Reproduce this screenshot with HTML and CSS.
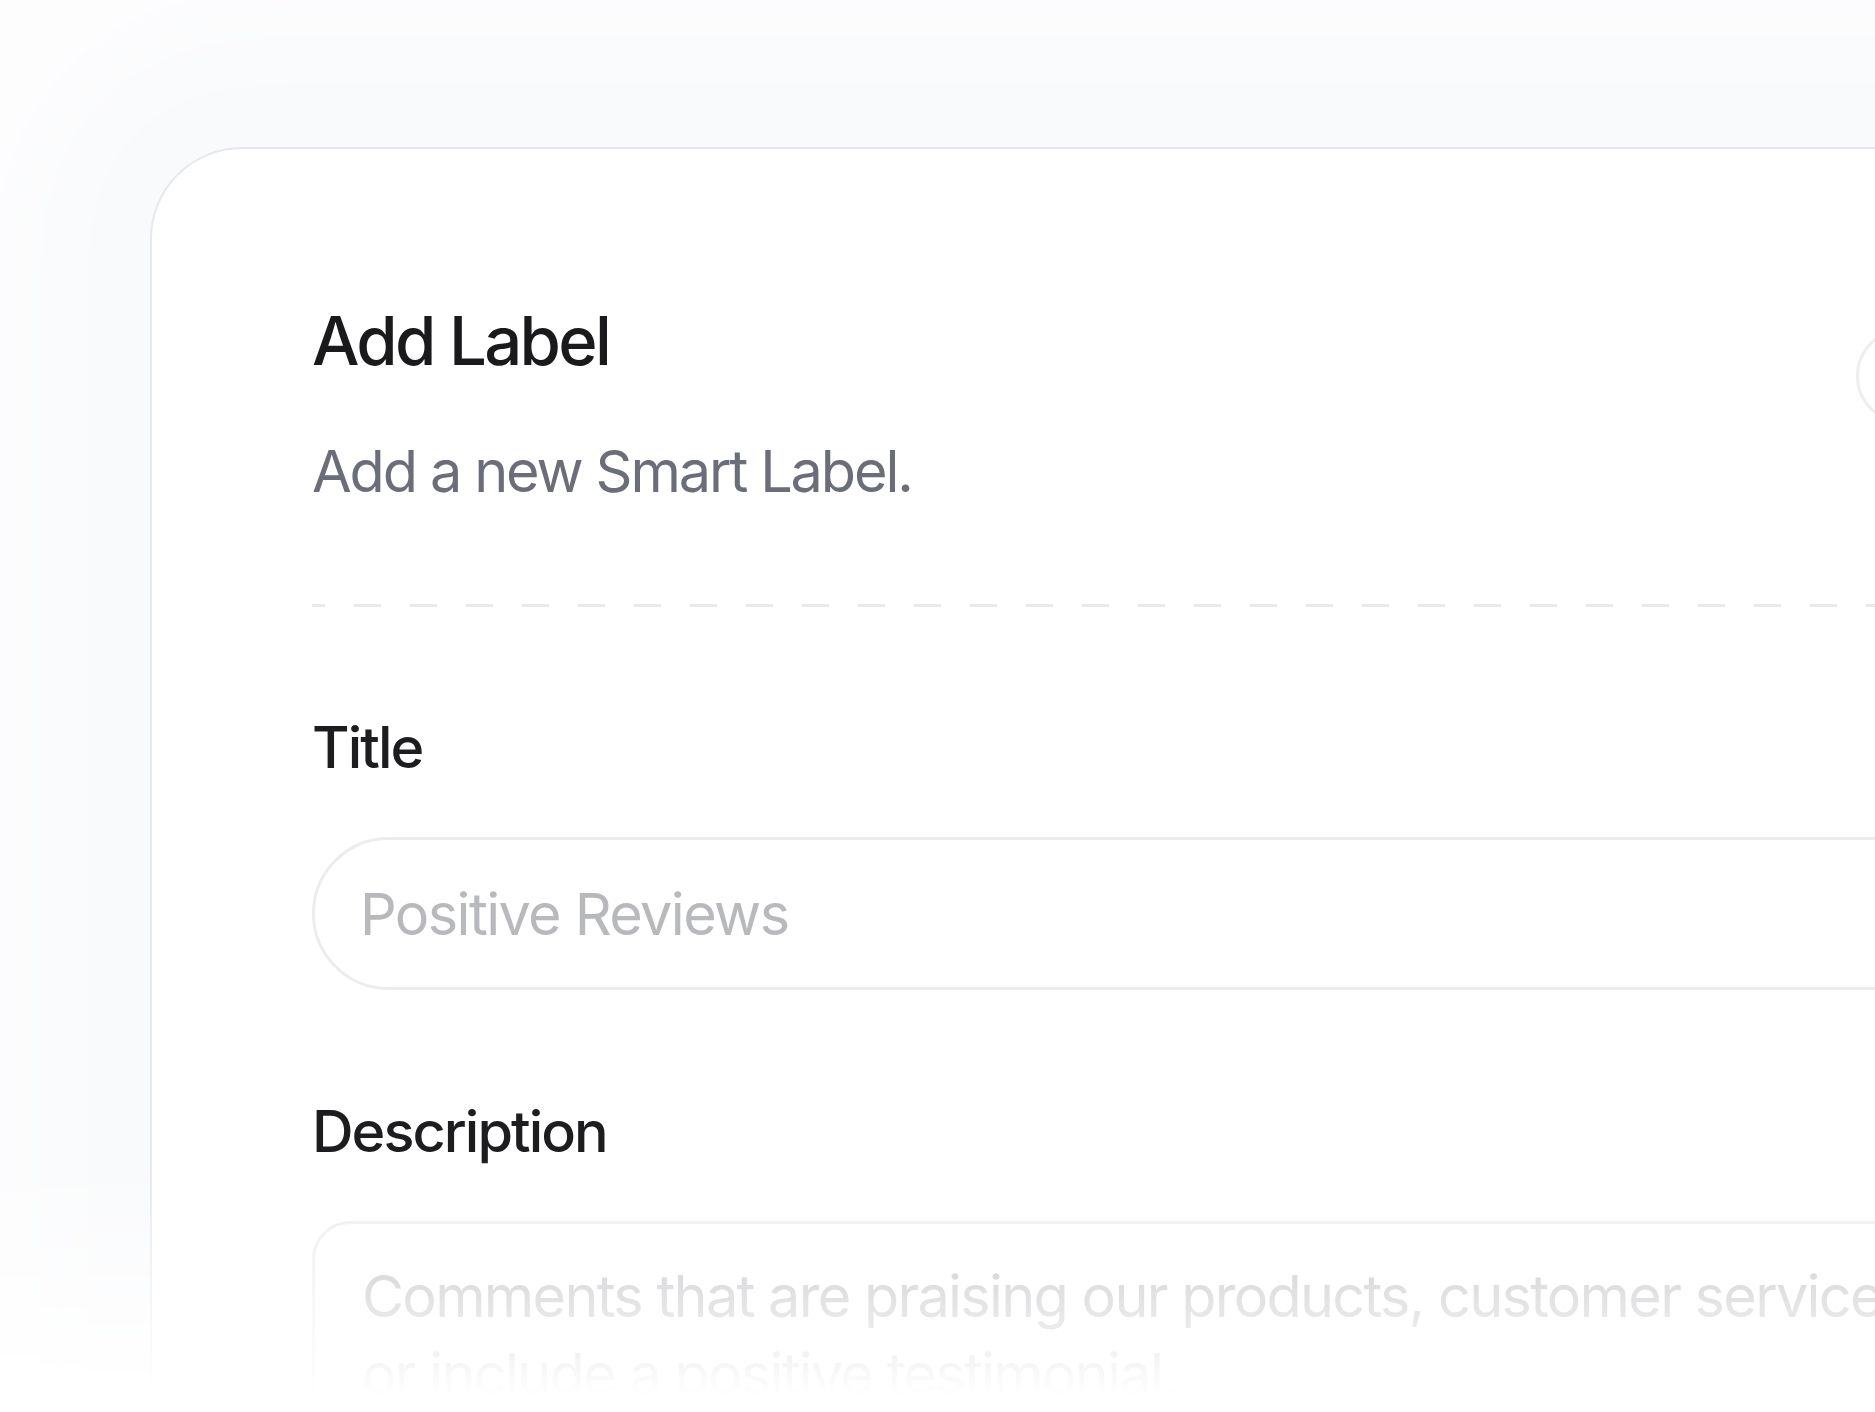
FILE: index.html
```html
<!DOCTYPE html>
<html lang="en">
<head>
<meta charset="utf-8">
<title>Add Label</title>
<link rel="stylesheet" href="styles.css">
</head>
<body>
<div class="stage">
  <section class="card">
    <header class="header">
      <div class="heading">
        <h1 class="title">Add Label</h1>
        <p class="subtitle">Add a new Smart Label.</p>
      </div>
      <button class="close" type="button" aria-label="Close">
        <svg viewBox="0 0 24 24" width="40" height="40" fill="none" stroke="#71717a" stroke-width="2" stroke-linecap="round"><path d="M6 6l12 12M18 6L6 18"/></svg>
      </button>
    </header>
    <div class="divider"></div>
    <form class="form">
      <div class="field">
        <label class="label" for="title">Title</label>
        <input class="input" id="title" type="text" placeholder="Positive Reviews">
      </div>
      <div class="field field-desc">
        <label class="label" for="desc">Description</label>
        <textarea class="textarea" id="desc" placeholder="Comments that are praising our products, customer service,&#10;or include a positive testimonial."></textarea>
      </div>
    </form>
  </section>
</div>
</body>
</html>
```

FILE: styles.css
```css
html, body {
  margin: 0;
  padding: 0;
  background: #ffffff;
}

.stage {
  width: 1875px;
  height: 1412px;
  overflow: hidden;
  box-sizing: border-box;
  padding: 147px 0 0 150px;
  background: #fdfdfe;
  font-family: Inter, "Noto Sans", sans-serif;
  -webkit-mask-image: linear-gradient(to bottom, #000 1160px, transparent 1395px);
  mask-image: linear-gradient(to bottom, #000 1160px, transparent 1395px);
}

.card {
  width: 1964px;
  min-height: 1500px;
  box-sizing: border-box;
  border: 2px solid #e6e8ec;
  border-radius: 92px;
  background: #ffffff;
  padding: 152px 160px 0;
  box-shadow: 0 0 100px 110px #f9fafc;
}

.header {
  display: flex;
  justify-content: space-between;
  align-items: flex-start;
}

.title {
  margin: 0;
  font-size: 67px;
  line-height: 80px;
  font-weight: 500;
  color: #1a1a1d;
  letter-spacing: -0.04em;
}

.subtitle {
  margin: 52px 0 0;
  font-size: 57.6px;
  line-height: 77px;
  font-weight: 400;
  color: #6b6e78;
  letter-spacing: -0.037em;
}

.close {
  width: 96px;
  height: 96px;
  margin-top: 27px;
  box-sizing: border-box;
  border: 3px solid #eeeeee;
  border-radius: 50%;
  background: #ffffff;
  display: flex;
  align-items: center;
  justify-content: center;
  padding: 0;
}

.divider {
  height: 3px;
  margin-top: 94px;
  background-image: linear-gradient(to right, #e9e9e9 27px, transparent 27px);
  background-size: 56px 100%;
  background-position: -14px 0;
  background-repeat: repeat-x;
}

.form {
  display: flex;
  flex-direction: column;
}

.field {
  display: flex;
  flex-direction: column;
  margin-top: 102px;
}

.field-desc {
  margin-top: 103px;
}

.label {
  font-size: 57.6px;
  line-height: 77px;
  font-weight: 500;
  color: #1d1d20;
  letter-spacing: -0.034em;
}

.input {
  margin-top: 51px;
  height: 153px;
  box-sizing: border-box;
  border: 3px solid #ececec;
  border-radius: 999px;
  padding: 0 45px;
  font-family: Inter, "Noto Sans", sans-serif;
  font-size: 57.6px;
  letter-spacing: -0.028em;
  color: #18181b;
  background: #ffffff;
  outline: none;
}

.textarea {
  margin-top: 51px;
  height: 420px;
  box-sizing: border-box;
  border: 3px solid #ececec;
  border-radius: 38px;
  padding: 33px 10px 0 47px;
  font-family: Inter, "Noto Sans", sans-serif;
  font-size: 57.6px;
  line-height: 78px;
  letter-spacing: -0.03em;
  color: #18181b;
  background: #ffffff;
  resize: none;
  outline: none;
  overflow: hidden;
}

.input::placeholder,
.textarea::placeholder {
  color: #b8b9bd;
  opacity: 1;
}
```
